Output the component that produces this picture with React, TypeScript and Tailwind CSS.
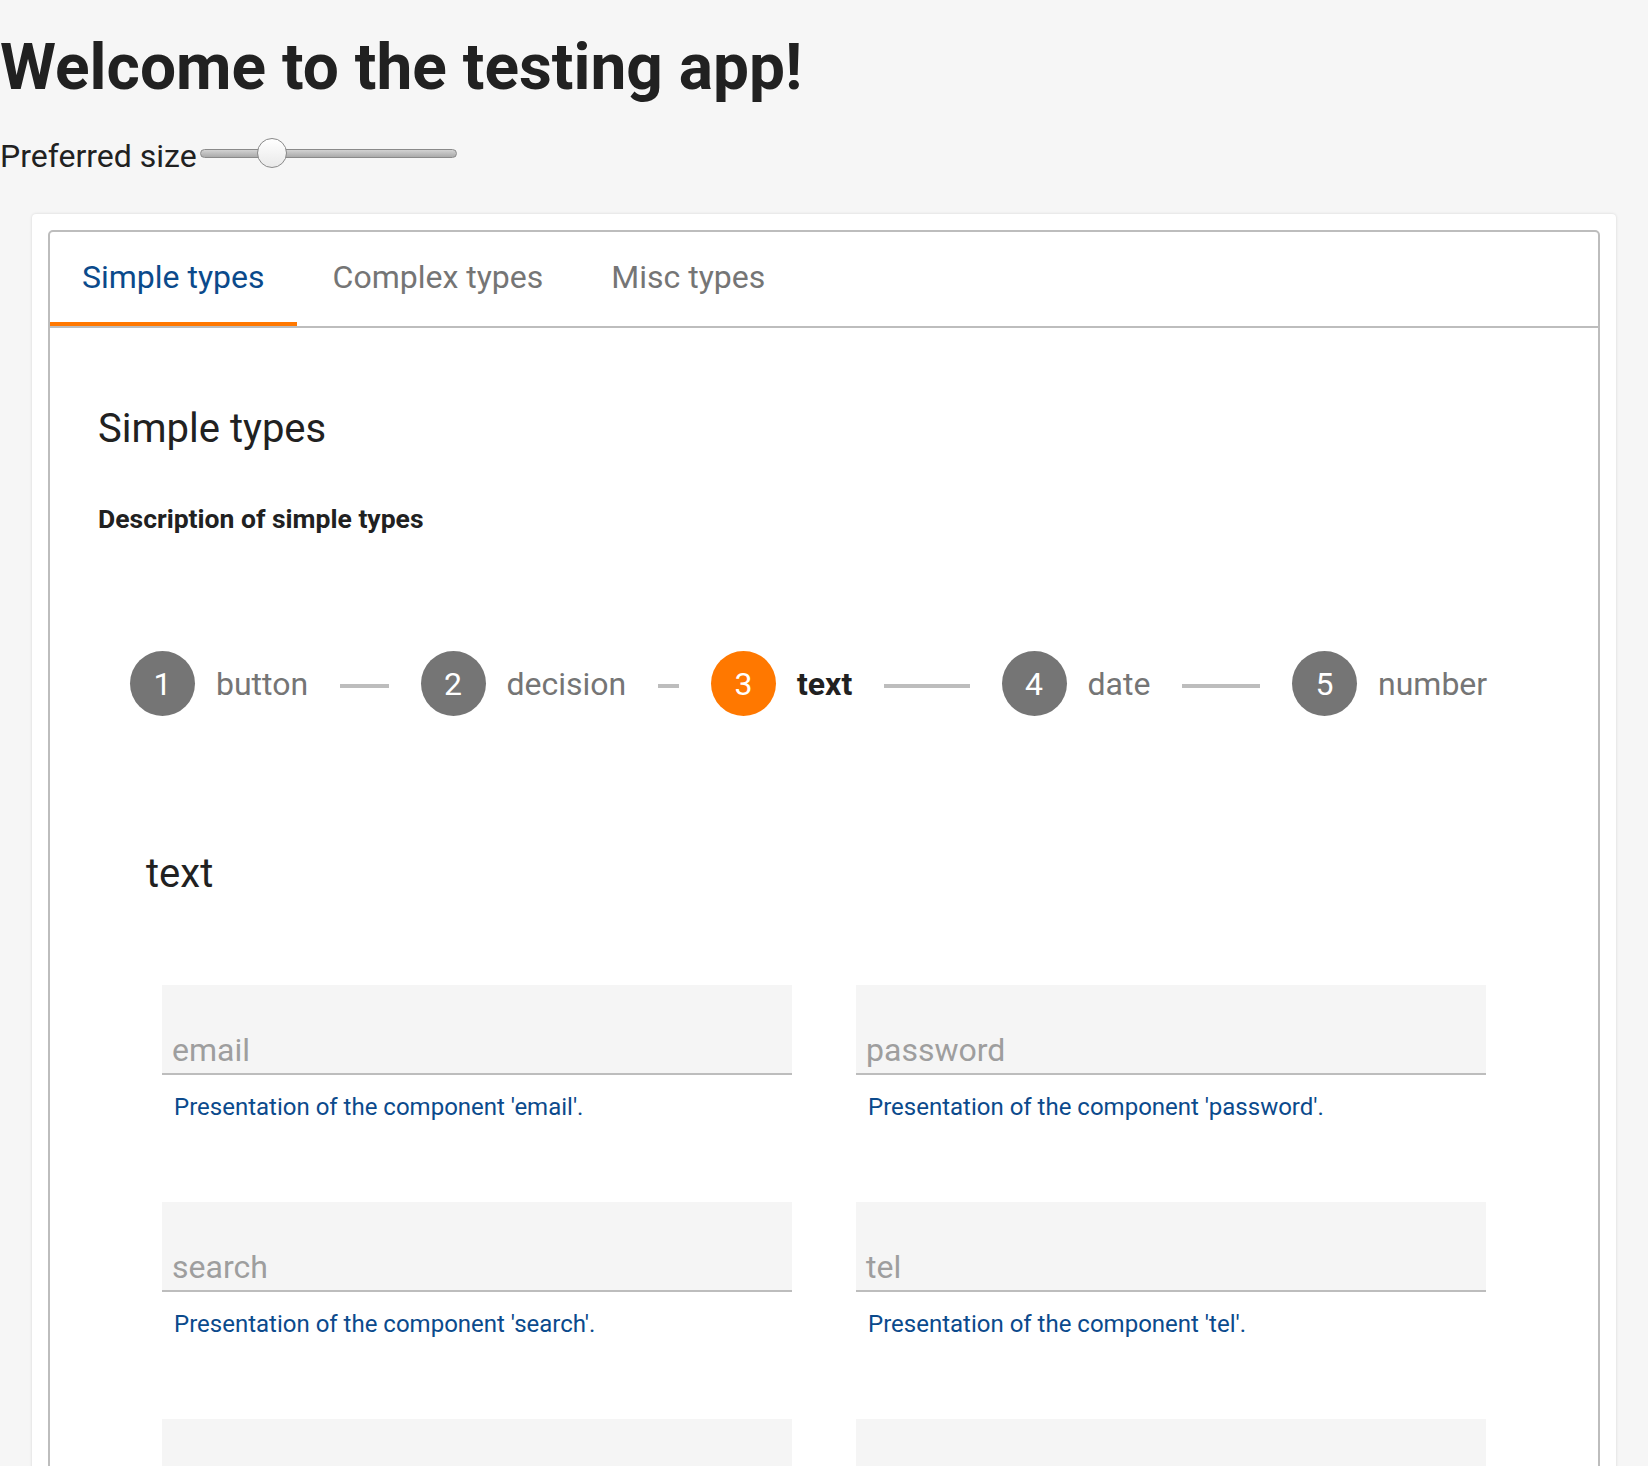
export default function App() {
  const steps = [
    { n: 1, label: "button", active: false },
    { n: 2, label: "decision", active: false },
    { n: 3, label: "text", active: true },
    { n: 4, label: "date", active: false },
    { n: 5, label: "number", active: false },
  ];
  const fields = ["email", "password", "search", "tel", "text", "url"];
  return (
    <div className="min-h-screen bg-[#f6f6f6] font-['Roboto',sans-serif] text-[#212121]">
      <h1 className="m-0 pt-[36px] text-[64px] font-bold leading-[64px]">Welcome to the testing app!</h1>
      <div className="mt-[36px] flex items-start">
        <span className="text-[32px] leading-[40px]">Preferred size</span>
        <div className="relative ml-[3px] mt-[2px] h-[30px] w-[257px]">
          <div className="absolute left-0 right-0 top-[10.5px] h-[9px] rounded-full border border-[#8a8a8a] bg-linear-to-b from-[#d2d2d2] to-[#ababab]" />
          <div className="absolute left-[57px] top-0 h-[30px] w-[30px] rounded-full border-[1.5px] border-[#8a8a8a] bg-linear-to-b from-white to-[#e9e9e9]" />
        </div>
      </div>
      <div className="mx-8 mt-[38px] rounded-[4px] bg-white p-4 shadow-[0_0_3px_rgba(0,0,0,0.14)]">
        <div className="rounded-[5px] border-2 border-[#bdbdbd] pb-[200px]">
          <div className="flex border-b-2 border-[#bdbdbd]">
            <div className="relative h-[94px] px-8 pt-[29px] text-[32px] leading-[32px] text-[#0b4a8b]">
              Simple types
              <div className="absolute bottom-0 left-0 right-0 h-1 bg-[#ff7800]" />
            </div>
            <div className="h-[94px] pl-[36px] pr-[34px] pt-[29px] text-[32px] leading-[32px] text-[#757575]">Complex types</div>
            <div className="h-[94px] px-[34px] pt-[29px] text-[32px] leading-[32px] text-[#757575]">Misc types</div>
          </div>
          <div className="px-[46px]">
            <h2 className="m-0 pl-[2px] pt-[77px] text-[40px] font-normal leading-[48px]">Simple types</h2>
            <p className="m-0 mt-[50px] pl-[2px] text-[26.5px] font-bold leading-[32px]">Description of simple types</p>
            <div className="ml-[34px] mt-[116px] flex items-center">
              {steps.map((s, i) => (
                <div key={s.n} className={i < 4 ? "flex w-[290.5px] items-center" : "flex items-center"}>
                  <div
                    className={
                      s.active
                        ? "flex h-[65px] w-[65px] shrink-0 items-center justify-center rounded-full bg-[#ff7800] text-[32px] leading-none text-white"
                        : "flex h-[65px] w-[65px] shrink-0 items-center justify-center rounded-full bg-[#757575] text-[32px] leading-none text-white"
                    }
                  >
                    {s.n}
                  </div>
                  <span
                    className={
                      s.active
                        ? "ml-[21px] text-[32px] font-bold leading-[40px] text-[#212121]"
                        : "ml-[21px] text-[32px] leading-[40px] text-[#757575]"
                    }
                  >
                    {s.label}
                  </span>
                  {i < 4 && <div className="mx-8 mt-1 h-1 flex-1 bg-[#bdbdbd]" />}
                </div>
              ))}
            </div>
            <div className="mx-[34px]">
              <h3 className="m-0 mt-[134px] pl-4 text-[40px] font-normal leading-[48px]">text</h3>
              <div className="mt-[87px] grid grid-cols-2 gap-y-[83px]">
                {fields.map((f) => (
                  <div key={f} className="px-8">
                    <div className="flex h-[90px] items-end border-b-2 border-[#bdbdbd] bg-[#f5f5f5] pb-[7px] pl-[10px] text-[32px] leading-[32px] text-[#9e9e9e]">
                      {f}
                    </div>
                    <div className="mt-[20px] pl-[12px] text-[24px] leading-[24px] text-[#0b4a8c]">
                      Presentation of the component '{f}'.
                    </div>
                  </div>
                ))}
              </div>
            </div>
          </div>
        </div>
      </div>
    </div>
  );
}
